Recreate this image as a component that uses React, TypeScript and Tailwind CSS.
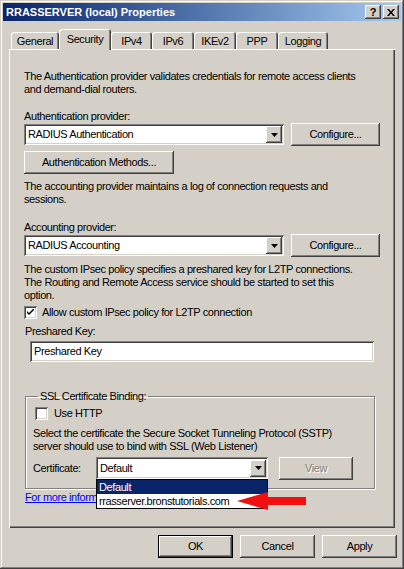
import React from "react";

function Btn({ label, w, dim, def }: { label: string; w: string; dim?: boolean; def?: boolean }) {
  return (
    <div
      className={`${w} h-[23px] flex items-center justify-center bg-[#d4d0c8] ${
        def
          ? "shadow-[inset_0_0_0_1px_#000000,inset_-2px_-2px_#404040,inset_2px_2px_#ffffff,inset_-3px_-3px_#808080]"
          : "shadow-[inset_-1px_-1px_#404040,inset_1px_1px_#ffffff,inset_-2px_-2px_#808080]"
      } ${dim ? "text-[#808080] [text-shadow:1px_1px_#ffffff]" : "text-black"}`}
    >
      {label}
    </div>
  );
}

function Combo({ value, w, children }: { value: string; w: string; children?: React.ReactNode }) {
  return (
    <div className={`relative ${w} h-[21px] bg-white shadow-[inset_1px_1px_#808080,inset_-1px_-1px_#ffffff,inset_2px_2px_#404040,inset_-2px_-2px_#d4d0c8] flex items-center p-[2px]`}>
      <span className="flex-1 pl-[2px] truncate">{value}</span>
      <div className="w-[16px] h-[17px] bg-[#d4d0c8] shadow-[inset_-1px_-1px_#404040,inset_1px_1px_#ffffff,inset_-2px_-2px_#808080] flex items-center justify-center">
        <svg width="7" height="4" viewBox="0 0 7 4">
          <path d="M0 0h7L3.5 4z" fill="#000" />
        </svg>
      </div>
      {children}
    </div>
  );
}

function Check({ checked }: { checked?: boolean }) {
  return (
    <div className="w-[13px] h-[13px] shrink-0 bg-white shadow-[inset_1px_1px_#808080,inset_-1px_-1px_#ffffff,inset_2px_2px_#404040,inset_-2px_-2px_#d4d0c8] flex items-center justify-center">
      {checked && (
        <svg width="7" height="7" viewBox="0 0 7 7">
          <path d="M0 2l2 2 5-5v2L2 6 0 4z" fill="#000" />
        </svg>
      )}
    </div>
  );
}

const tabs = ["General", "Security", "IPv4", "IPv6", "IKEv2", "PPP", "Logging"];
const tabW = ["w-[48px]", "w-[52px]", "w-[41px]", "w-[42px]", "w-[42px]", "w-[42px]", "w-[50px]"];

export default function App() {
  return (
    <div className="w-[404px] h-[569px] bg-[#d4d0c8] p-[3px] flex flex-col whitespace-nowrap font-['Liberation_Sans',Arial,sans-serif] text-[11px] leading-[13px] tracking-[-0.4px] text-black shadow-[inset_-1px_-1px_#404040,inset_1px_1px_#d4d0c8,inset_-2px_-2px_#808080,inset_2px_2px_#ffffff]">
      {/* title bar */}
      <div className="h-[18px] bg-linear-to-r from-[#0a246a] to-[#a6caf0] flex items-center pl-[3px] pr-[2px]">
        <span className="flex-1 text-white font-bold text-[11px] tracking-normal">RRASSERVER (local) Properties</span>
        <div className="w-[16px] h-[14px] bg-[#d4d0c8] shadow-[inset_-1px_-1px_#404040,inset_1px_1px_#ffffff,inset_-2px_-2px_#808080] flex items-center justify-center font-bold text-[11px] leading-none">?</div>
        <div className="ml-[2px] w-[16px] h-[14px] bg-[#d4d0c8] shadow-[inset_-1px_-1px_#404040,inset_1px_1px_#ffffff,inset_-2px_-2px_#808080] flex items-center justify-center">
          <svg width="8" height="7" viewBox="0 0 8 7">
            <path d="M0 0h2l2 2.5L6 0h2L5 3.5 8 7H6L4 4.5 2 7H0l3-3.5z" fill="#000" />
          </svg>
        </div>
      </div>

      {/* tabs */}
      <div className="mt-[8px] ml-[8px] h-[20px] flex items-end">
        {tabs.map((t, i) => (
          <div
            key={t}
            className={`${tabW[i]} ${
              i === 1 ? "relative z-10 h-[21px] -mb-px pb-[4px]" : "h-[17px] pb-[1px]"
            } bg-[#d4d0c8] rounded-t-[3px] shadow-[inset_1px_1px_#ffffff,inset_-1px_0_#404040,inset_-2px_0_#808080] flex items-end justify-center`}
          >
            {t}
          </div>
        ))}
      </div>

      {/* page */}
      <div className="mx-[6px] h-[479px] pt-[21px] px-[15px] shadow-[inset_1px_1px_#ffffff,inset_-1px_-1px_#404040,inset_-2px_-2px_#808080] flex flex-col">
        <p>
          The Authentication provider validates credentials for remote access clients
          <br />
          and demand-dial routers.
        </p>
        <p className="mt-[14px]">Authentication provider:</p>
        <div className="flex items-center h-[23px]">
          <Combo value="RADIUS Authentication" w="w-[260px]" />
          <div className="ml-[7px]">
            <Btn label="Configure..." w="w-[89px]" />
          </div>
        </div>
        <div className="mt-[5px]">
          <Btn label="Authentication Methods..." w="w-[150px]" />
        </div>
        <p className="mt-[6px]">
          The accounting provider maintains a log of connection requests and
          <br />
          sessions.
        </p>
        <p className="mt-[15px]">Accounting provider:</p>
        <div className="flex items-center h-[23px]">
          <Combo value="RADIUS Accounting" w="w-[260px]" />
          <div className="ml-[7px]">
            <Btn label="Configure..." w="w-[89px]" />
          </div>
        </div>
        <p className="mt-[6px]">
          The custom IPsec policy specifies a preshared key for L2TP connections.
          <br />
          The Routing and Remote Access service should be started to set this
          <br />
          option.
        </p>
        <div className="mt-[4px] flex items-center gap-[5px]">
          <Check checked />
          <span>Allow custom IPsec policy for L2TP connection</span>
        </div>
        <p className="mt-[6px] ml-[1px]">Preshared Key:</p>
        <div className="mt-[3px] ml-[6px] w-[344px] h-[21px] bg-white shadow-[inset_1px_1px_#808080,inset_-1px_-1px_#ffffff,inset_2px_2px_#404040,inset_-2px_-2px_#d4d0c8] flex items-center pl-[4px]">
          Preshared Key
        </div>

        <fieldset className="mt-[28px] ml-[1px] w-[350px] h-[99px] border border-[#808080] shadow-[1px_1px_#ffffff,inset_1px_1px_#ffffff] pl-[7px]">
          <legend className="ml-[5px] px-[2px]">SSL Certificate Binding:</legend>
          <div className="mt-[4px] ml-[2px] flex items-center gap-[6px]">
            <Check />
            <span>Use HTTP</span>
          </div>
          <p className="mt-[7px]">
            Select the certificate the Secure Socket Tunneling Protocol (SSTP)
            <br />
            server should use to bind with SSL (Web Listener)
          </p>
          <div className="mt-[4px] flex items-center h-[22px]">
            <span className="w-[63px]">Certificate:</span>
            <Combo value="Default" w="w-[172px] h-[22px]">
              <div className="absolute left-0 top-full w-full h-[30px] bg-white border border-black z-20 flex flex-col">
                <div className="h-[14px] bg-[#0a246a] text-white flex items-center pl-[2px]">Default</div>
                <div className="h-[14px] flex items-center pl-[2px]">rrasserver.bronstutorials.com</div>
              </div>
              <svg className="absolute left-[141px] top-[33px] z-30" width="70" height="22" viewBox="0 0 70 22">
                <path d="M0 11L31 2v5h38v8H31v5z" fill="#f01010" />
              </svg>
            </Combo>
            <div className="ml-[11px]">
              <Btn label="View" w="w-[74px]" dim />
            </div>
          </div>
        </fieldset>

        <p className="mt-[2px] ml-[1px]">
          <a className="text-[#0000ff] underline">For more information</a>
        </p>
      </div>

      {/* dialog buttons */}
      <div className="mt-[7px] mr-[4px] flex justify-end gap-[7px]">
        <Btn label="OK" w="w-[75px]" def />
        <Btn label="Cancel" w="w-[75px]" />
        <Btn label="Apply" w="w-[75px]" />
      </div>
    </div>
  );
}
